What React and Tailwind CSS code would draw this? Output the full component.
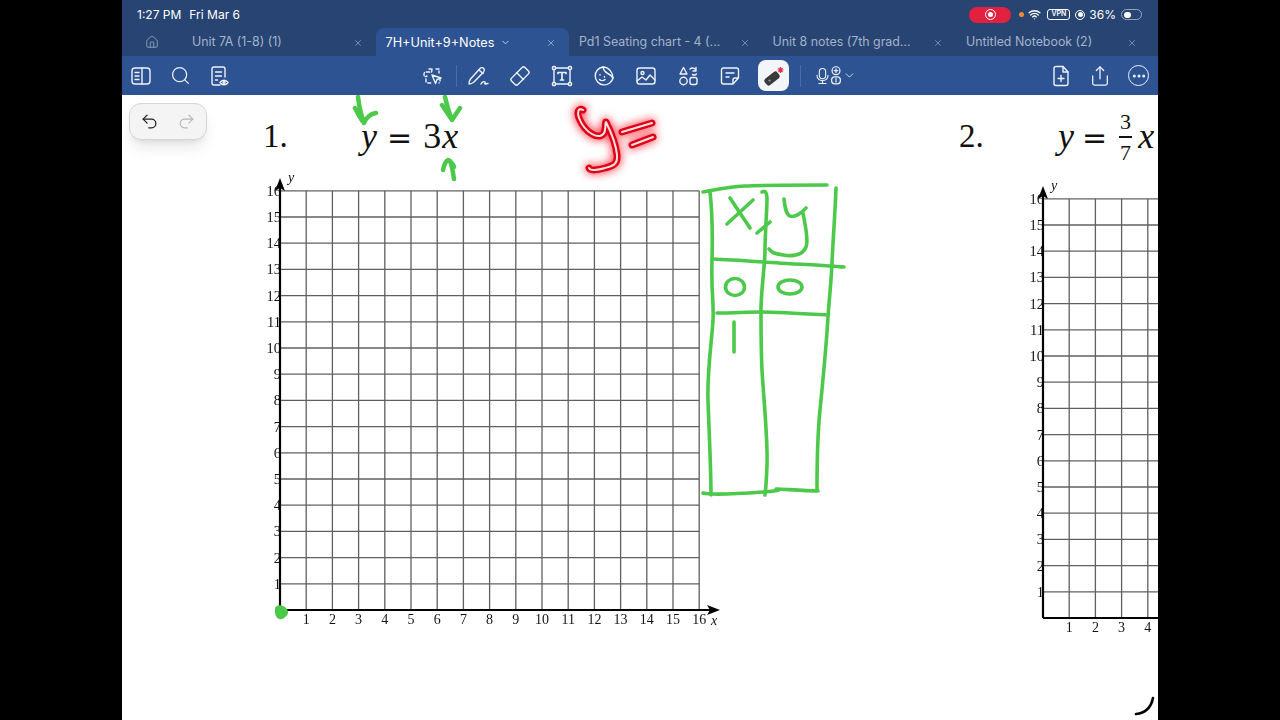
import { House, Search, X, ChevronDown, Wifi, Undo2, Redo2, Share, Ellipsis } from "lucide-react";

const tabs = ["Unit 7A (1-8) (1)", "7H+Unit+9+Notes", "Pd1 Seating chart - 4 (...", "Unit 8 notes (7th grad...", "Untitled Notebook (2)"];
const CELL = 26.2;
const serif = "font-['Liberation_Serif',serif]";

function Icon({ children, className = "w-6 h-6", viewBox = "0 0 24 24" }) {
  return (
    <svg viewBox={viewBox} fill="none" stroke="currentColor" strokeWidth="1.4" strokeLinecap="round" strokeLinejoin="round" className={`shrink-0 ${className}`}>
      {children}
    </svg>
  );
}

function ToolIcons() {
  return (
    <>
      <Icon>
        <path d="M12 5c-.5 4 .5 3-4 3s-4 1-4 3 1 2 3 1M16 5h3v4M20 14v3l-1 2M6 15v3l2 1h3M11 5H9" strokeDasharray="3 2" />
        <path d="M12 11l9 3-4 1.500-1.500 4z" />
      </Icon>
      <div className="w-px h-[22px] bg-white/15 -ml-[6px] -mr-[9px] shrink-0" />
      <Icon>
        <path d="M3 20c-.2-2 .5-3.500 1.500-5L14 4.500c1.200-1.200 3-1 3.800 0 .8 1 .8 2.200-.2 3.400L8 18c-1.500 1.200-3 2-5 2z" />
        <path d="M13 6l4 3.500M15 20c1-2 3-3 4-2s-1 2 0 2 2-.5 3-.5" />
      </Icon>
      <Icon>
        <rect x="2.500" y="7.500" width="19" height="9" rx="2" transform="rotate(-45 12 12)" />
        <path d="M8.500 8.500l7 7" />
      </Icon>
      <Icon>
        <rect x="4" y="4" width="16" height="16" />
        <rect x="2.500" y="2.500" width="3" height="3" rx="1" fill="#2e5392" />
        <rect x="18.500" y="2.500" width="3" height="3" rx="1" fill="#2e5392" />
        <rect x="2.500" y="18.500" width="3" height="3" rx="1" fill="#2e5392" />
        <rect x="18.500" y="18.500" width="3" height="3" rx="1" fill="#2e5392" />
        <path d="M8 8.500h8M12 8.500v7.500M10.500 16h3M8 8.500v1M16 8.500v1" strokeWidth="1.700" />
      </Icon>
      <Icon>
        <path d="M11 3a9 9 0 1 0 10 11c0-5-4-11-10-11z" />
        <path d="M11 3c.5 3 2 5 4 6s4 2 6 5" />
        <path d="M8 10.500v.5M12.500 12.500v.5M7.500 15.500c1.500 1.500 4 1.500 5.500 0" />
      </Icon>
      <Icon>
        <rect x="3" y="4" width="18" height="16" rx="2.500" />
        <circle cx="8.500" cy="9" r="1.500" />
        <path d="M3 17l5-4 4 3 4-5 5 5" />
      </Icon>
      <Icon>
        <path d="M7.500 3.500L11 10H4zM14 5c2-2 5-1 6 1.500M20 3.500v3.500h-3M20.500 10c-1 1-3 1-4 .5" />
        <circle cx="7.500" cy="17" r="3.700" />
        <rect x="14" y="13.500" width="7" height="7" rx="2" />
      </Icon>
      <Icon>
        <path d="M20.500 14V6a2 2 0 0 0-2-2h-13a2 2 0 0 0-2 2v12a2 2 0 0 0 2 2H15l5.500-6zM15 20v-4a2 2 0 0 1 2-2h3.500M8 9h8M8 13h3" />
      </Icon>
      <div className="w-[31px] h-[31px] -ml-[2px] rounded-lg bg-[#f3f5f9] flex items-center justify-center shrink-0">
        <svg viewBox="0 0 24 24" className="w-6 h-6">
          <rect x="2" y="10.500" width="16" height="8" rx="2.500" fill="#3a3a3c" transform="rotate(-38 10 14.500)" />
          <circle cx="7.500" cy="16.500" r="1.100" fill="#9a9a9a" />
          <path d="M18.500 3v6M15.500 6h6M16.500 4l4 4M20.500 4l-4 4" stroke="#e3324c" strokeWidth="1.200" />
        </svg>
      </div>
      <div className="w-px h-[22px] bg-white/15 -ml-[7px] -mr-[6px] shrink-0" />
      <div className="flex items-center shrink-0">
        <Icon className="w-[19px] h-6">
          <rect x="8" y="2.500" width="8" height="13" rx="4" />
          <path d="M5 11c0 9 14 9 14 0M12 18v3.500M7.500 21.500h9" />
        </Icon>
        <Icon className="w-[14px] h-[21px] -ml-[3px]" viewBox="4 0 16 24">
          <circle cx="12" cy="6.500" r="4.500" />
          <path d="M12 4.500v4M10 6.500h4" />
          <rect x="7" y="13.500" width="10" height="8" rx="3.500" />
          <path d="M12 15.500v4" />
        </Icon>
        <ChevronDown size={13} strokeWidth={1.500} />
      </div>
    </>
  );
}

function Graph({ left, top, cols = 16 }) {
  const rows = [...Array(16)].map((_, i) => i + 1);
  const columns = rows.slice(0, cols);
  const ox = 30;
  const oy = 440;
  const full = cols === 16;
  return (
    <svg width="490" height="470" className="absolute overflow-visible opacity-[0.99]" style={{ left, top }}>
      {columns.map((i) => (
        <g key={i}>
          <line x1={ox + i * CELL} x2={ox + i * CELL} y1={oy} y2={oy - 16 * CELL} stroke="#5f5f5f" strokeWidth="1.300" />
          <text x={ox + i * CELL} y={oy + 14} textAnchor="middle" fontSize="14" fill="#111" fontFamily="Liberation Serif, serif">{i}</text>
        </g>
      ))}
      {rows.map((i) => (
        <g key={i}>
          <line x1={ox} x2={full ? ox + 16 * CELL : ox + 120} y1={oy - i * CELL} y2={oy - i * CELL} stroke="#5f5f5f" strokeWidth="1.300" />
          <text x={ox + 1} y={oy - i * CELL + 5} textAnchor="end" fontSize="14.500" fill="#111" fontFamily="Liberation Serif, serif">{i}</text>
        </g>
      ))}
      <line x1={ox} x2={ox} y1={oy} y2={oy - 16 * CELL - 8} stroke="#000" strokeWidth="2.200" />
      <line x1={ox} x2={full ? ox + 16 * CELL + 12 : ox + 120} y1={oy} y2={oy} stroke="#000" strokeWidth="2.200" />
      <path d={`M${ox} ${oy - 432}l5 13-5-3-5 3z`} fill="#000" />
      <text x={ox + 8} y={oy - 428} fontSize="14" fontStyle="italic" fill="#111" fontFamily="Liberation Serif, serif">y</text>
      {full && <path d={`M${ox + 440} ${oy}l-13-5 3 5-3 5z`} fill="#000" />}
      {full && <text x={ox + 431} y={oy + 15} fontSize="14" fontStyle="italic" fill="#111" fontFamily="Liberation Serif, serif">x</text>}
    </svg>
  );
}

function Ink() {
  const green = "#4cc94a";
  const paths = [
    "M703 192C715 190 725 187 745 186S800 185 827 185",
    "M710 192C712 210 713 225 712 260S714 300 713 320S707 370 708 400S711 470 711 495",
    "M762 192C765 190 767 192 767 200S765 235 765 250S761 290 761 310S761 350 762 370S768 440 767 465S766 485 765 495",
    "M836 188C835 215 833 240 832 263S829 300 828 317S822 390 820 410S817 470 817 490",
    "M712 259C735 260 750 261 763 262S815 265 830 266S840 267 844 267",
    "M717 313C735 313 745 312 760 312S810 314 828 315",
    "M703 493C710 495 735 494 763 492S772 489 777 489S805 491 818 491",
    "M730 198L750 228M753 200L727 224M770 222L757 233",
    "M784 199C785 208 786 214 790 216S802 213 806 208M803 213C805 225 809 240 806 247S795 257 783 255S772 252 769 249",
    "M734 322L734 352",
    "M358 97C359 105 361 115 364 123M355 108C358 114 361 120 364 123C366 118 370 114 376 113",
    "M445 97C447 105 449 113 452 120M442 105L452 120L460 108",
    "M454 179C453 172 452 166 450 161M443 170C444 165 446 161 448 160C450 161 453 164 454 167",
  ];
  const red = "M583 110C578 107 577 113 579 118S585 130 592 134S604 136 605 130S605 122 606 122C610 130 616 145 617 155S612 166 605 168S590 171 589 168M622 132L652 123M632 145L653 137";
  return (
    <svg width="1280" height="720" viewBox="0 0 1280 720" className="absolute pointer-events-none" style={{ left: -122, top: -95 }}>
      <g fill="none" stroke={green} strokeLinecap="round" strokeLinejoin="round">
        {paths.map((d, i) => <path key={i} d={d} strokeWidth={i > 9 ? 4.500 : 3.600} />)}
        <ellipse cx="735" cy="287" rx="9.500" ry="8.500" strokeWidth="3.600" />
        <ellipse cx="790" cy="287" rx="12" ry="7" strokeWidth="3.600" />
      </g>
      <path d="M275 608C277 604 283 605 286 608S289 615 284 618S276 618 275 613z" fill={green} />
      <g fill="none" strokeLinecap="round" strokeLinejoin="round" className="drop-shadow-[0_0_5px_#ff1020]">
        <path d={red} stroke="#e00018" strokeWidth="7" />
        <path d={red} stroke="#ffe4e4" strokeWidth="2" />
      </g>
      <path d="M1136 714C1146 713 1151 708 1153 698" fill="none" stroke="#000" strokeWidth="2.600" strokeLinecap="round" />
    </svg>
  );
}

export default function App() {
  return (
    <div className="w-[1280px] h-[720px] bg-black overflow-hidden pl-[122px] font-['Inter',sans-serif]">
      <div className="w-[1036px] h-full flex flex-col bg-white">
        {/* Status bar */}
        <div className="h-7 shrink-0 bg-[#284472] text-white flex items-center pl-[15px] pr-[16px] pt-[1px] text-[12px]">
          <span>1:27 PM</span>
          <span className="ml-[8px]">Fri Mar 6</span>
          <div className="ml-auto flex items-center">
            <div className="w-[42px] h-4 rounded-full bg-[#e2203f] flex items-center justify-center">
              <div className="w-[11px] h-[11px] rounded-full border border-white flex items-center justify-center">
                <div className="w-[5px] h-[5px] rounded-full bg-white" />
              </div>
            </div>
            <div className="ml-[7.500px] w-[5px] h-[5px] rounded-full bg-[#ee8a3a]" />
            <Wifi size={13} strokeWidth={2.500} className="ml-[4.500px]" />
            <div className="ml-[6px] w-[23px] h-[11px] rounded-[3px] border border-white text-[7px] font-semibold flex items-center justify-center">VPN</div>
            <div className="ml-[5px] w-[10px] h-[10px] rounded-full border border-white flex items-center justify-center">
              <div className="w-[5px] h-[5px] rounded-full bg-white" />
            </div>
            <span className="ml-[4px]">36%</span>
            <div className="ml-[5px] w-[21px] h-[11px] rounded-full border border-white/50 p-[1.500px]">
              <div className="w-[7px] h-full rounded-full bg-white" />
            </div>
          </div>
        </div>

        {/* Tabs */}
        <div className="h-7 shrink-0 bg-[#284472] flex text-[#a3b3cd]">
          <div className="w-[60px] flex items-center justify-center shrink-0">
            <House size={14} strokeWidth={1.300} />
          </div>
          {tabs.map((t, i) => (
            <div key={t} className={`w-[193.500px] pl-[10px] pr-[13px] pt-[1px] flex items-center justify-between shrink-0 ${i === 1 ? "bg-[#2e5392] text-white text-[12.700px] rounded-t-lg" : "text-[12.400px]"}`}>
              <span className="flex items-center gap-[6px] whitespace-nowrap">
                {t}
                {i === 1 && <ChevronDown size={11} strokeWidth={1.500} />}
              </span>
              <X size={10} strokeWidth={1.500} className={i === 1 ? "text-[#c3cfe2]" : ""} />
            </div>
          ))}
        </div>

        {/* Toolbar */}
        <div className="h-[39px] shrink-0 bg-[#2e5392] text-[#eef2f8] flex items-center pl-[7px] pr-[9px]">
          <div className="flex items-center gap-[15px]">
            <Icon>
              <rect x="3" y="4" width="18" height="16" rx="3" />
              <path d="M13 4v16M6 8.500h4M6 12h4M6 15.500h4" />
            </Icon>
            <div className="w-6 flex justify-center">
              <Search size={21} strokeWidth={1.400} />
            </div>
            <Icon>
              <path d="M13 21H7a2 2 0 0 1-2-2V5a2 2 0 0 1 2-2h9a2 2 0 0 1 2 2v8M8.500 8h6M8.500 12h6M8.500 16h2" />
              <path d="M13 18.500c2-3 6-3 8 0-2 3-6 3-8 0z" />
              <circle cx="17" cy="18.500" r="1" />
            </Icon>
          </div>
          <div className="ml-[189px] flex items-center gap-[18px]">
            <ToolIcons />
          </div>
          <div className="ml-auto flex items-center">
            <Icon>
              <path d="M14 2.500H7a2 2 0 0 0-2 2v15a2 2 0 0 0 2 2h10a2 2 0 0 0 2-2V8z" />
              <path d="M14 2.500V8h5M12 11.500v6M9 14.500h6" />
            </Icon>
            <div className="w-6 ml-[15px] flex justify-center">
              <Share size={22} strokeWidth={1.400} />
            </div>
            <div className="w-[21px] h-[21px] ml-[16px] rounded-full border-[1.400px] border-current flex items-center justify-center shrink-0">
              <Ellipsis size={16} strokeWidth={2.500} />
            </div>
          </div>
        </div>

        {/* Page */}
        <div className={`relative flex-1 overflow-hidden ${serif} text-[#111]`}>
          <div className="absolute left-[7px] top-[8px] w-[78px] h-[37px] rounded-xl bg-[#f4f4f4] border border-[#d6d6d6] shadow-lg flex items-center justify-center gap-[18px] font-['Inter',sans-serif] z-10">
            <Undo2 size={19} strokeWidth={1.600} className="text-[#222]" />
            <Redo2 size={19} strokeWidth={1.400} className="text-[#b5b5b5]" />
          </div>

          <div className="absolute left-[141px] top-[21px] text-[33px] leading-[40px]">1.</div>
          <div className="absolute left-[239px] top-[21px] text-[36px] leading-[40px] flex items-baseline">
            <i>y</i>
            <span className="ml-[10px] font-['DejaVu_Sans',sans-serif] text-[30px]">=</span>
            <span className="ml-[11px]">3</span>
            <i className="ml-[1px]">x</i>
          </div>

          <div className="absolute left-[837px] top-[21px] text-[33px] leading-[40px]">2.</div>
          <div className="absolute left-[936px] top-[21px] text-[36px] leading-[40px] flex items-baseline">
            <i>y</i>
            <span className="ml-[8px] font-['DejaVu_Sans',sans-serif] text-[30px]">=</span>
            <i className="ml-[31px]">x</i>
          </div>
          <div className="absolute left-[997px] top-[15px] w-[13px] flex flex-col items-center text-[22px] leading-[24px]">
            <span>3</span>
            <div className="w-[13px] h-[1.500px] bg-[#111] mt-[2px] mb-[3px]" />
            <span>7</span>
          </div>

          <Graph left={128} top={75} />
          <Graph left={891} top={83} cols={4} />
          <Ink />
        </div>
      </div>
    </div>
  );
}
